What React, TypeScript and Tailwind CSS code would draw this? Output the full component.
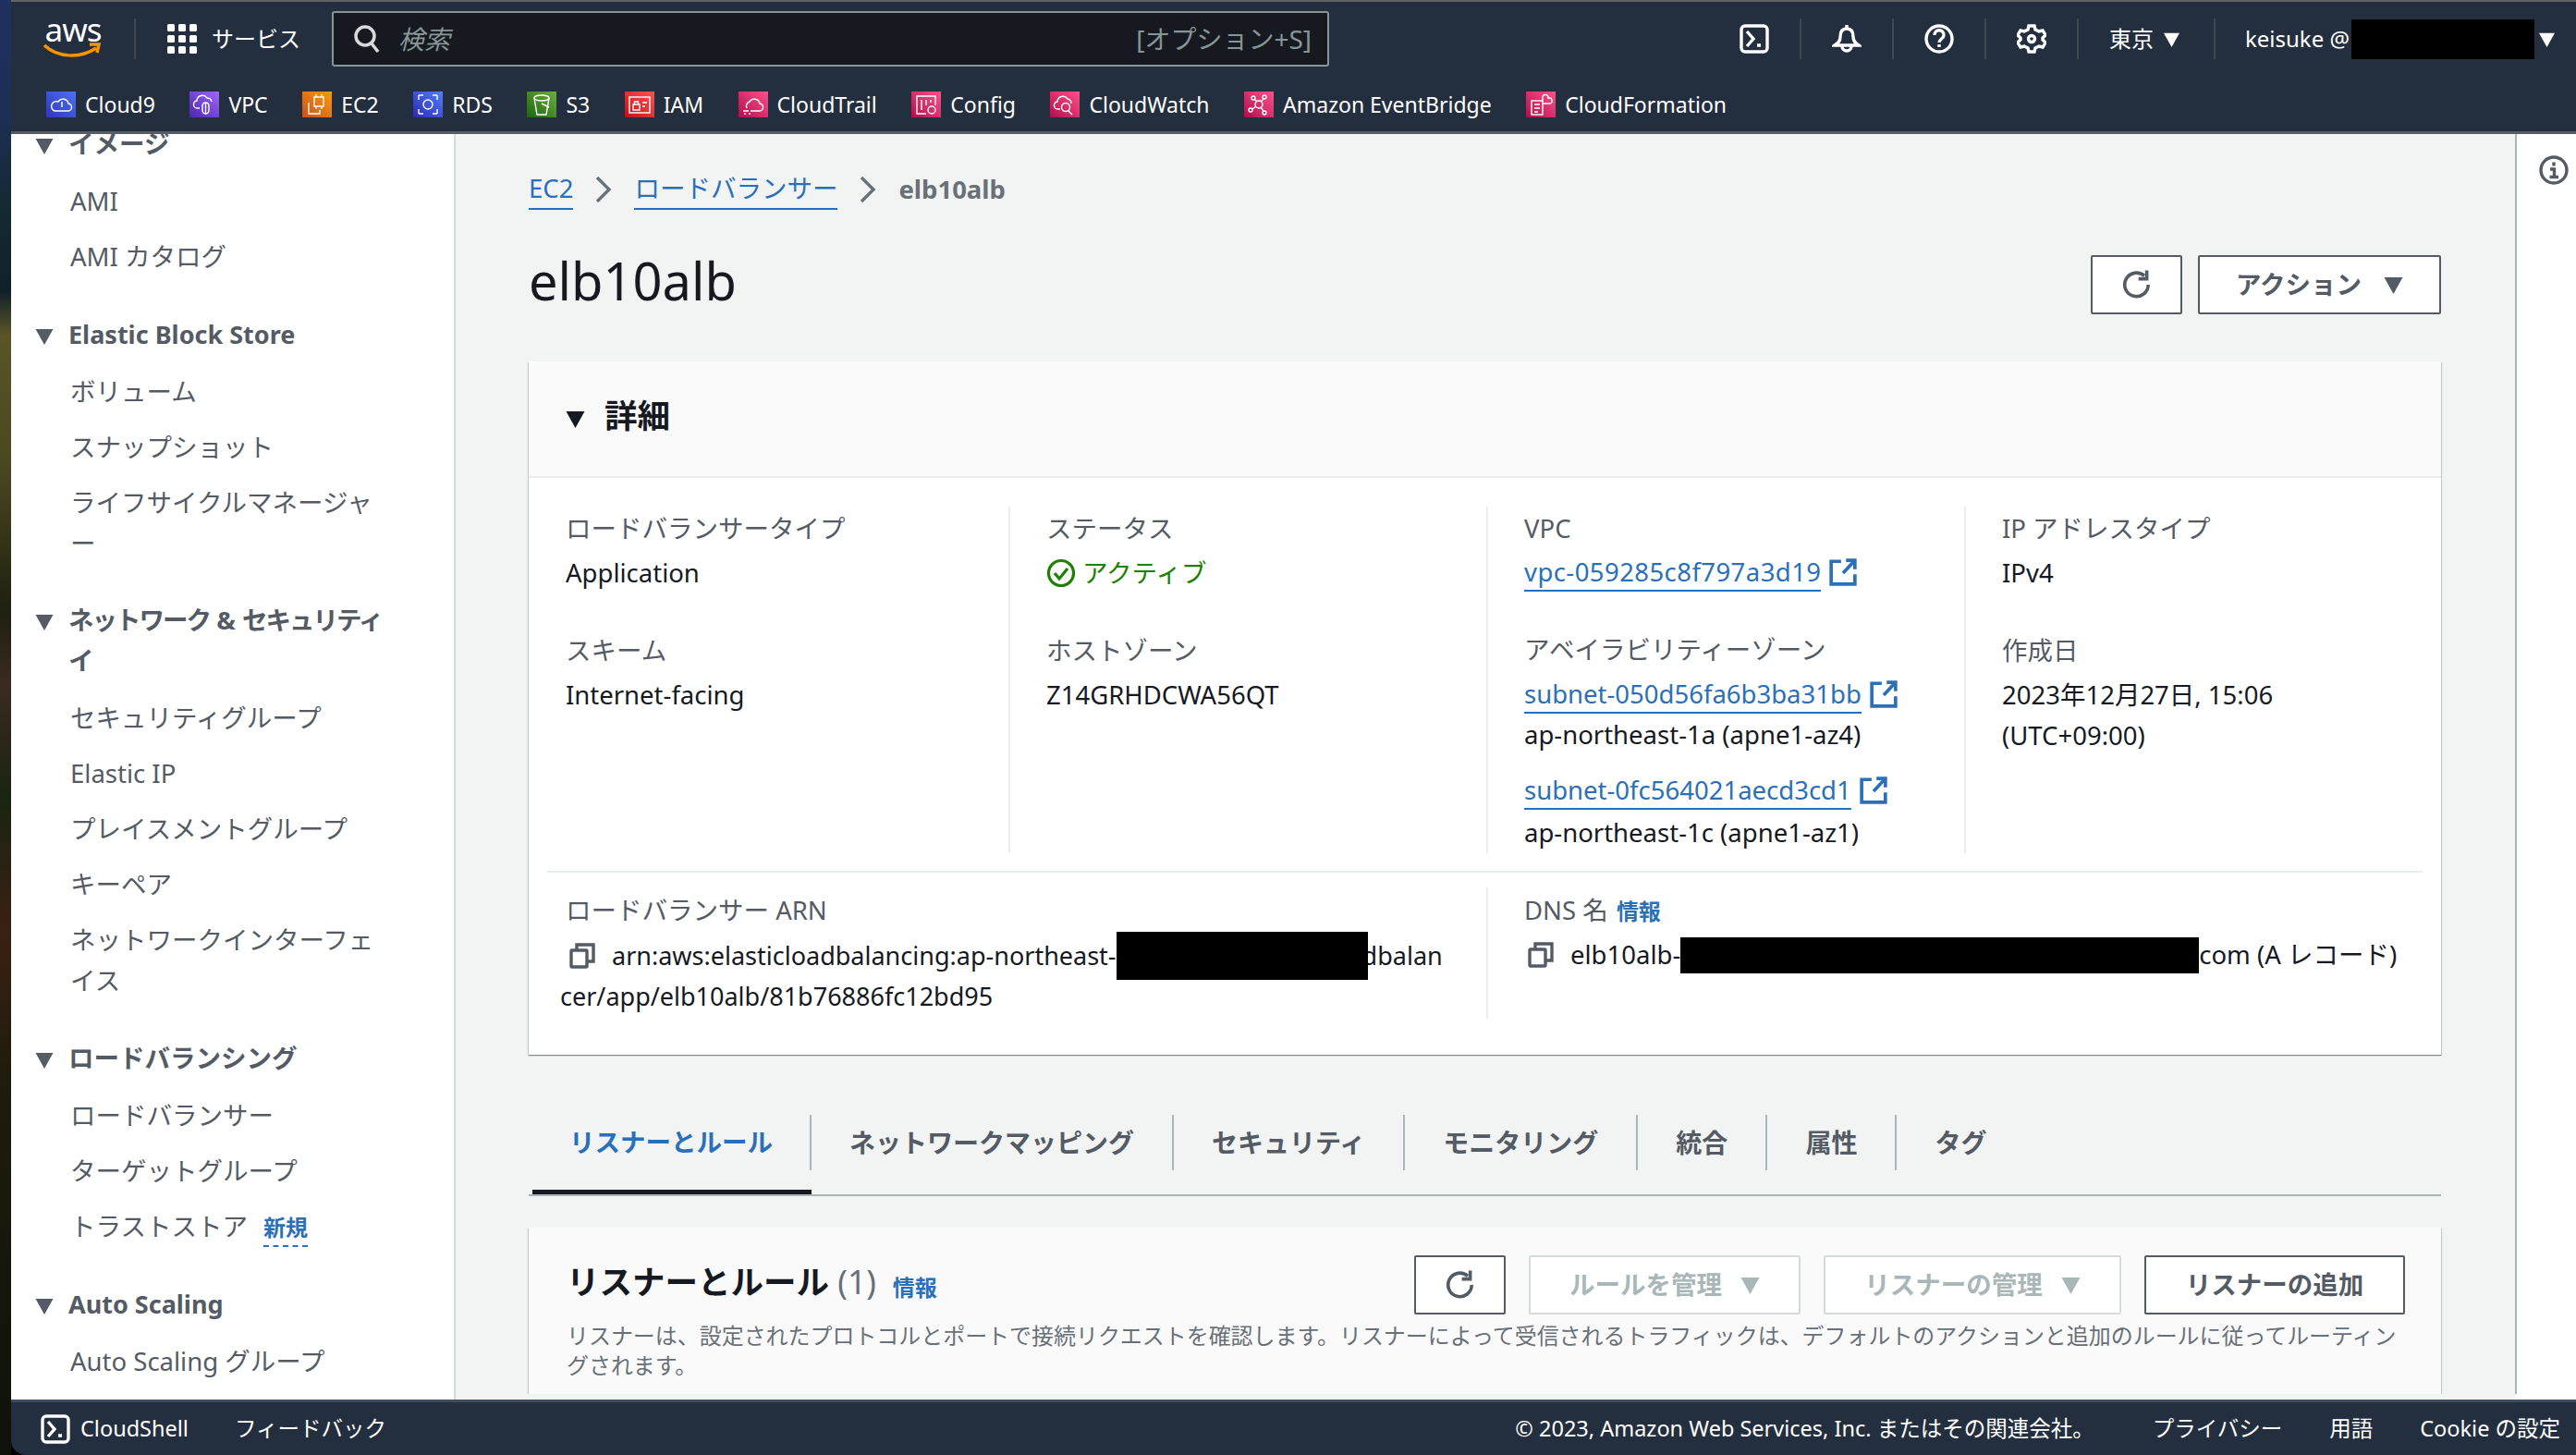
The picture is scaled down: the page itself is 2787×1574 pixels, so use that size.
import React from 'react';

const Caret = ({ className }: { className: string }) => (
  <svg viewBox="0 0 10 10" className={className}>
    <path d="M0 1h10L5 10z" fill="currentColor" />
  </svg>
);

const Chevron = () => (
  <svg viewBox="0 0 18 28" className="h-[28px] w-[18px] text-[#687078]" fill="none" stroke="currentColor" strokeWidth="3.4">
    <path d="M2 1l13 13L2 27" />
  </svg>
);

const RefreshIcon = ({ className }: { className: string }) => (
  <svg viewBox="0 0 32 32" className={className} fill="none" stroke="currentColor" strokeWidth="3.4">
    <path d="M27.5 16a12 12 0 1 1-4-9" />
    <path d="M26 1.5V10h-8.5" />
  </svg>
);

const CopyIcon = () => (
  <svg viewBox="0 0 28 28" className="h-[28px] w-[28px] text-[#545b64]" fill="none" stroke="currentColor" strokeWidth="3.4">
    <rect x="2" y="8" width="17" height="18" rx="1" />
    <path d="M8 8V2h18v18h-7" />
  </svg>
);

const ExternalIcon = () => (
  <svg viewBox="0 0 28 28" className="h-[30px] w-[30px] text-[#2a70b8]" fill="none" stroke="currentColor" strokeWidth="3.4">
    <path d="M12 3H2v23h24V16" />
    <path d="M14 15L25 3M17 2h9v9" />
  </svg>
);

const ShellIcon = () => (
  <svg viewBox="0 0 32 32" className="h-[32px] w-[32px] text-white" fill="none" stroke="currentColor" strokeWidth="3.4">
    <rect x="2" y="2" width="28" height="28" rx="4" />
    <path d="M8 8l7 8-7 8" />
    <path d="M19 23h4" strokeWidth="3.5" />
  </svg>
);

const BellIcon = () => (
  <svg viewBox="0 0 32 32" className="h-[32px] w-[32px] text-white" fill="none" stroke="currentColor" strokeWidth="3.4">
    <path d="M16 1v4M16 5c-5 0-7 4-7 9 0 5-3 7-6 9h26c-3-2-6-4-6-9 0-5-2-9-7-9z" />
    <path d="M11 24a5 5 0 0 0 10 0" />
  </svg>
);

const HelpIcon = () => (
  <svg viewBox="0 0 32 32" className="h-[32px] w-[32px] text-white" fill="none" stroke="currentColor" strokeWidth="3.4">
    <circle cx="16" cy="16" r="14" />
    <path d="M11 12c0-7 10-7 10 0 0 4-5 4-5 8" />
    <path d="M16 22v3" />
  </svg>
);

const GearIcon = () => (
  <svg viewBox="0 0 32 32" className="h-[32px] w-[32px] text-white" fill="none" stroke="currentColor" strokeWidth="3.4">
    <path d="M13 2h6l1 4 4 2 4-1 3 5-3 3v2l3 3-3 5-4-1-4 2-1 4h-6l-1-4-4-2-4 1-3-5 3-3v-2L1 12l3-5 4 1 4-2z" />
    <circle cx="16" cy="16" r="3.5" />
  </svg>
);

const shortcuts = [
  { name: 'Cloud9', bg: 'bg-gradient-to-tr from-[#3334b9] to-[#4d72f3]', icon: <><path d="M9 21h14a4 4 0 0 0 1-8 6 6 0 0 0-11-2 5 5 0 0 0-4 10z" /><path d="M17 11v6" /></> },
  { name: 'VPC', bg: 'bg-gradient-to-tr from-[#4d27a8] to-[#a166ff]', icon: <><path d="M11 18H9a4 4 0 0 1-1-8 6 6 0 0 1 11-3 5 5 0 0 1 5 4" /><rect x="14" y="12" width="7" height="12" rx="3.5" /><path d="M17.5 12v12" /></> },
  { name: 'EC2', bg: 'bg-gradient-to-tr from-[#c8511b] to-[#ff9900]', icon: <><rect x="13" y="6" width="10" height="10" /><path d="M7 12v12h12v-4M15 3v3M21 3v3M15 16v3M21 16v3" /></> },
  { name: 'RDS', bg: 'bg-gradient-to-tr from-[#2e27ad] to-[#527fff]', icon: <><rect x="11" y="9" width="10" height="10" rx="5" /><path d="M6 4h5M6 4v5M26 4h-5M26 4v5M6 24h5M6 24v-5M26 24h-5M26 24v-5" /></> },
  { name: 'S3', bg: 'bg-gradient-to-tr from-[#1b660f] to-[#6cae3e]', icon: <><path d="M8 7l3 18h10l3-18" /><ellipse cx="16" cy="7" rx="8" ry="3" /><path d="M16 13l8 4" /></> },
  { name: 'IAM', bg: 'bg-gradient-to-tr from-[#bd0816] to-[#ff5252]', icon: <><rect x="5" y="6" width="22" height="17" /><rect x="9" y="14" width="7" height="6" /><path d="M10.5 14v-3h4v3M19 12h5M19 16h3" /></> },
  { name: 'CloudTrail', bg: 'bg-gradient-to-tr from-[#b0084d] to-[#ff4f8b]', icon: <><path d="M13 21h9a4 4 0 0 0 1-8 6 6 0 0 0-11-2 5 5 0 0 0-3 7" /><path d="M5 21h6M6 24h2M11 24h2" /></> },
  { name: 'Config', bg: 'bg-gradient-to-tr from-[#b0084d] to-[#ff4f8b]', icon: <><path d="M16 24H6V5h20v10" /><path d="M11 9v11M16 9v6M21 9v3" /><circle cx="22" cy="20" r="4" /></> },
  { name: 'CloudWatch', bg: 'bg-gradient-to-tr from-[#b0084d] to-[#ff4f8b]', icon: <><path d="M11 19H9a4 4 0 0 1-1-8 6 6 0 0 1 11-3 5 5 0 0 1 4 5" /><circle cx="17" cy="17" r="4.5" /><path d="M20 21l4 4" /></> },
  { name: 'Amazon EventBridge', bg: 'bg-gradient-to-tr from-[#b0084d] to-[#ff4f8b]', icon: <><circle cx="16" cy="14" r="4" /><circle cx="10" cy="7" r="2" /><circle cx="22" cy="6" r="2" /><circle cx="7" cy="20" r="2" /><circle cx="22" cy="23" r="2" /><path d="M11 8l3 3M21 8l-3 3M9 19l4-3M21 21l-3-4" /></> },
  { name: 'CloudFormation', bg: 'bg-gradient-to-tr from-[#b0084d] to-[#ff4f8b]', icon: <><path d="M18 11V6a3 3 0 0 1 6 1 3 3 0 0 1 2 6h-8" /><rect x="6" y="10" width="12" height="15" /><path d="M9 14h6M9 18h6M9 22h4" /></> },
];

const sidebar: { title: React.ReactNode; items: React.ReactNode[] }[] = [
  { title: 'イメージ', items: ['AMI', 'AMI カタログ'] },
  { title: <span className="text-[27px]">Elastic Block Store</span>, items: ['ボリューム', 'スナップショット', <>ライフサイクルマネージャ<br />ー</>] },
  {
    title: <><span className="tracking-[-2px]">ネットワーク</span> &amp; <span className="tracking-[-2px]">セキュリティ</span><br />イ</>,
    items: ['セキュリティグループ', 'Elastic IP', 'プレイスメントグループ', 'キーペア', <>ネットワークインターフェ<br />イス</>],
  },
  {
    title: 'ロードバランシング',
    items: [
      'ロードバランサー',
      'ターゲットグループ',
      <>トラストストア<span className="ml-[17px] border-b-2 border-dashed border-[#2a70b8] pb-[3px] text-[24px] font-bold text-[#2a70b8]">新規</span></>,
    ],
  },
  { title: <span className="text-[27px]">Auto Scaling</span>, items: ['Auto Scaling グループ'] },
];

const tabs = ['リスナーとルール', 'ネットワークマッピング', 'セキュリティ', 'モニタリング', '統合', '属性', 'タグ'];

const Label = ({ children }: { children: React.ReactNode }) => (
  <div className="text-[27.5px] leading-[44px] text-[#545b64]">{children}</div>
);

const Value = ({ children, className = '' }: { children: React.ReactNode; className?: string }) => (
  <div className={`text-[27.5px] leading-[44px] text-[#16191f] ${className}`}>{children}</div>
);

const ExtLink = ({ children, className = '' }: { children: React.ReactNode; className?: string }) => (
  <div className={`flex items-center gap-[9px] text-[27.5px] leading-[44px] text-[#2a70b8] ${className}`}>
    <span className="h-[42px] border-b-2 border-[#2a70b8] leading-[42px]">{children}</span>
    <ExternalIcon />
  </div>
);

const App: React.FC = () => {
  return (
    <div className="flex h-[1574px] w-[2787px] overflow-hidden bg-black font-['Noto_Sans','Noto_Sans_CJK_JP',sans-serif]">
      {/* desktop wallpaper peeking out on the left */}
      <div className="w-[12px] shrink-0 bg-[linear-gradient(180deg,#1f3060_0%,#1c2f55_8%,#142a33_14%,#10202a_20%,#5a5426_23%,#4a4820_32%,#1e2010_42%,#3a2a20_47%,#1a2410_55%,#3a2012_64%,#1e1c0c_74%,#0e120a_100%)]" />

      <div className="flex min-w-0 flex-1 flex-col">
        {/* top nav */}
        <header className="h-[145px] shrink-0 border-t-2 border-b-[3px] border-t-[#5f6368] border-b-[#545b64] bg-[#232f3e]">
          <div className="flex h-[80px] items-center pl-[35px]">
            <div className="flex w-[64px] flex-col items-center">
              <span className="h-[26px] text-[35px] leading-[24px] tracking-[-1px] text-white">aws</span>
              <svg viewBox="0 0 64 18" className="h-[18px] w-[64px]" fill="none" stroke="#f79400" strokeWidth="3.5">
                <path d="M1 3c14 13 38 15 56 3M50 2h10l-2 9" />
              </svg>
            </div>
            <div className="ml-[34px] mr-[34px] h-[44px] w-[2px] bg-[#414750]" />
            <svg viewBox="0 0 32 32" className="h-[32px] w-[32px]" fill="#fff">
              <rect x="0" width="8" height="8" rx="1.5" /><rect x="12" width="8" height="8" rx="1.5" /><rect x="24" width="8" height="8" rx="1.5" />
              <rect x="0" y="12" width="8" height="8" rx="1.5" /><rect x="12" y="12" width="8" height="8" rx="1.5" /><rect x="24" y="12" width="8" height="8" rx="1.5" />
              <rect x="0" y="24" width="8" height="8" rx="1.5" /><rect x="12" y="24" width="8" height="8" rx="1.5" /><rect x="24" y="24" width="8" height="8" rx="1.5" />
            </svg>
            <span className="ml-[16px] w-[130px] text-[24px] text-white">サービス</span>
            <div className="flex h-[60px] w-[1079px] items-center rounded-[3px] border-2 border-[#879596] bg-[#16191f] pl-[22px] pr-[17px]">
              <svg viewBox="0 0 28 32" className="h-[32px] w-[28px] text-[#d5dbdb]" fill="none" stroke="currentColor" strokeWidth="3.5">
                <circle cx="12" cy="13" r="10" />
                <path d="M19 21l7 9" />
              </svg>
              <span className="ml-[20px] text-[28px] italic text-[#879596]">検索</span>
              <span className="ml-auto text-[28px] text-[#879596]">[オプション+S]</span>
            </div>
            <div className="ml-[444px] flex items-center">
              <ShellIcon />
              <div className="mx-[33px] h-[44px] w-[2px] bg-[#414750]" />
              <BellIcon />
              <div className="mx-[33px] h-[44px] w-[2px] bg-[#414750]" />
              <HelpIcon />
              <div className="mx-[33px] h-[44px] w-[2px] bg-[#414750]" />
              <GearIcon />
              <div className="mx-[33px] h-[44px] w-[2px] bg-[#414750]" />
              <span className="text-[24px] text-white">東京</span>
              <Caret className="ml-[11px] h-[17px] w-[17px] text-white" />
              <div className="ml-[37px] mr-[32px] h-[44px] w-[2px] bg-[#414750]" />
              <span className="w-[115px] text-[24px] text-white">keisuke @</span>
              <div className="h-[43px] w-[198px] bg-black" />
              <Caret className="ml-[5px] h-[17px] w-[17px] text-white" />
            </div>
          </div>
          <div className="mt-[15px] flex h-[32px] items-center gap-[37.5px] pl-[38px]">
            {shortcuts.map((s) => (
              <div key={s.name} className="flex items-center gap-[10px]">
                <div className={`flex h-[28px] w-[32px] items-center justify-center ${s.bg}`}>
                  <svg viewBox="0 0 32 28" className="h-[28px] w-[32px]" fill="none" stroke="#fff" strokeWidth="1.4">
                    {s.icon}
                  </svg>
                </div>
                <span className="text-[23px] leading-[32px] text-white">{s.name}</span>
              </div>
            ))}
          </div>
        </header>

        <div className="flex min-h-0 flex-1 bg-[#f2f3f3]">
          {/* side navigation */}
          <aside className="w-[481px] shrink-0 overflow-hidden border-r-2 border-[#d5dbdb] bg-white">
            <div className="mt-[-19px] flex flex-col gap-[25.5px]">
              {sidebar.map((section, i) => (
                <div key={i}>
                  <div className="flex py-[8px]">
                    <Caret className="ml-[26px] mr-[16px] mt-[14px] h-[19px] w-[20px] shrink-0 text-[#545b64]" />
                    <div className="text-[27.5px] font-bold leading-[44px] text-[#545b64]">{section.title}</div>
                  </div>
                  {section.items.map((item, j) => (
                    <div key={j} className="pb-[6px] pl-[64px] pt-[10px] text-[27.5px] leading-[44px] text-[#545b64]">
                      {item}
                    </div>
                  ))}
                </div>
              ))}
            </div>
          </aside>

          {/* page content */}
          <main className="h-[1363px] min-w-0 flex-1 overflow-hidden pl-[79px] pr-[80px] pt-[38px]">
            <div className="flex h-[44px] items-center text-[27.5px]">
              <span className="h-[44px] border-b-2 border-[#2a70b8] leading-[42px] text-[#2a70b8]">EC2</span>
              <span className="mx-[24px]"><Chevron /></span>
              <span className="h-[44px] border-b-2 border-[#2a70b8] leading-[42px] text-[#2a70b8]">ロードバランサー</span>
              <span className="mx-[24px]"><Chevron /></span>
              <span className="font-bold text-[#687078]">elb10alb</span>
            </div>

            <div className="mt-[49px] flex h-[64px] items-center justify-between">
              <h1 className="mb-[10px] text-[56px] leading-[64px] text-[#16191f]">elb10alb</h1>
              <div className="flex gap-[17px]">
                <button className="flex h-[64px] w-[99px] items-center justify-center rounded-[2px] border-2 border-[#545b64] bg-white text-[#545b64]">
                  <RefreshIcon className="h-[34px] w-[34px]" />
                </button>
                <button className="flex h-[64px] w-[263px] items-center justify-center gap-[24px] rounded-[2px] border-2 border-[#545b64] bg-white text-[27.5px] font-bold text-[#545b64]">
                  アクション
                  <Caret className="h-[20px] w-[21px]" />
                </button>
              </div>
            </div>

            {/* details card */}
            <section className="mt-[51px] h-[750px] bg-white shadow-[0_1px_1px_0_rgba(0,28,36,0.3),1px_1px_1px_0_rgba(0,28,36,0.15),-1px_1px_1px_0_rgba(0,28,36,0.15)]">
              <div className="flex h-[126px] items-center border-b-2 border-[#eaeded] bg-[#fafafa] pl-[40px]">
                <Caret className="h-[20px] w-[21px] text-[#16191f]" />
                <h2 className="mb-[6px] ml-[21px] text-[35.5px] font-bold text-[#16191f]">詳細</h2>
              </div>
              <div className="px-[20px] pt-[31px]">
                <div className="grid h-[374px] grid-cols-[499px_517px_517px_495px]">
                  <div className="pl-[20px] pt-[2px]">
                    <Label>ロードバランサータイプ</Label>
                    <Value className="mt-[4px]">Application</Value>
                    <div className="mt-[40px]"><Label>スキーム</Label></div>
                    <Value className="mt-[4px]">Internet-facing</Value>
                  </div>
                  <div className="border-l-2 border-[#eaeded] pl-[39px] pt-[2px]">
                    <Label>ステータス</Label>
                    <div className="mt-[4px] flex items-center gap-[7px] text-[27.5px] leading-[44px] text-[#1d8102]">
                      <svg viewBox="0 0 32 32" className="h-[32px] w-[32px]" fill="none" stroke="currentColor" strokeWidth="3.2">
                        <circle cx="16" cy="16" r="13.5" />
                        <path d="M9 16l5 6 9-11" />
                      </svg>
                      アクティブ
                    </div>
                    <div className="mt-[40px]"><Label>ホストゾーン</Label></div>
                    <Value className="mt-[4px]">Z14GRHDCWA56QT</Value>
                  </div>
                  <div className="border-l-2 border-[#eaeded] pl-[39px] pt-[2px]">
                    <Label>VPC</Label>
                    <ExtLink className="mt-[4px]"><span className="tracking-[0.43px]">vpc-059285c8f797a3d19</span></ExtLink>
                    <div className="mt-[41px]"><Label>アベイラビリティーゾーン</Label></div>
                    <ExtLink className="mt-[5px]">subnet-050d56fa6b3ba31bb</ExtLink>
                    <Value className="mt-[1px]">ap-northeast-1a (apne1-az4)</Value>
                    <ExtLink className="mt-[17px]">subnet-0fc564021aecd3cd1</ExtLink>
                    <Value className="mt-[3px]">ap-northeast-1c (apne1-az1)</Value>
                  </div>
                  <div className="border-l-2 border-[#eaeded] pl-[39px] pt-[2px]">
                    <Label>IP アドレスタイプ</Label>
                    <Value className="mt-[4px]">IPv4</Value>
                    <div className="mt-[40px]"><Label>作成日</Label></div>
                    <Value className="mt-[4px]">2023年12月27日, 15:06<br />(UTC+09:00)</Value>
                  </div>
                </div>
                <div className="mt-[20px] h-[2px] bg-[#eaeded]" />
                <div className="mt-[16px] grid grid-cols-[1016px_1fr]">
                  <div className="pl-[20px] pt-[3px]">
                    <Label>ロードバランサー ARN</Label>
                    <div className="mt-[5px] text-[27px] leading-[44px] text-[#16191f]">
                      <div className="flex h-[44px] items-center pl-[4px] whitespace-nowrap">
                        <CopyIcon />
                        <span className="ml-[18px]">arn:aws:elasticloadbalancing:ap-northeast-</span>
                        <span className="relative z-10 h-[52px] w-[272px] shrink-0 bg-black" />
                        <span className="ml-[-6px]">dbalan</span>
                      </div>
                      <div className="ml-[-6px]">cer/app/elb10alb/81b76886fc12bd95</div>
                    </div>
                  </div>
                  <div className="h-[142px] border-l-2 border-[#eaeded] pl-[39px] pt-[3px]">
                    <Label>DNS 名 <span className="ml-[2px] text-[24px] font-bold text-[#2a70b8]">情報</span></Label>
                    <div className="mt-[3px] flex h-[44px] items-center pl-[4px] text-[27.5px] text-[#16191f] whitespace-nowrap">
                      <CopyIcon />
                      <span className="ml-[18px]">elb10alb-</span>
                      <span className="h-[39px] w-[561px] shrink-0 bg-black" />
                      <span>com (A レコード)</span>
                    </div>
                  </div>
                </div>
              </div>
            </section>

            {/* tabs */}
            <div className="mt-[65px] flex h-[88px] items-start border-b-2 border-[#aab7b8] pl-[4px]">
              {tabs.map((t, i) => (
                <div key={t} className={`h-[86px] ${i === 0 ? 'border-b-[5px] border-[#16191f]' : ''}`}>
                  <div
                    className={`flex h-[60px] items-center font-bold ${i === 0 ? 'px-[40px] text-[27.5px] text-[#2a70b8]' : 'px-[41px] text-[28px] text-[#545b64]'} ${i < tabs.length - 1 ? 'border-r-2 border-[#aab7b8]' : ''}`}
                  >
                    {t}
                  </div>
                </div>
              ))}
            </div>

            {/* listeners card */}
            <section className="mt-[34px] bg-[#fafafa] pb-[20px] pl-[41px] pr-[39px] pt-[30px] shadow-[0_1px_1px_0_rgba(0,28,36,0.3),1px_1px_1px_0_rgba(0,28,36,0.15),-1px_1px_1px_0_rgba(0,28,36,0.15)]">
              <div className="flex h-[64px] items-center">
                <h2 className="mb-[6px] text-[35.5px] font-bold text-[#16191f]">
                  リスナーとルール <span className="font-normal text-[#687078]">(1)</span>
                </h2>
                <span className="ml-[18px] mt-[6px] text-[24px] font-bold text-[#2a70b8]">情報</span>
                <div className="ml-auto flex items-center gap-[25px]">
                  <button className="flex h-[64px] w-[99px] items-center justify-center rounded-[2px] border-2 border-[#545b64] bg-white text-[#545b64]">
                    <RefreshIcon className="h-[34px] w-[34px]" />
                  </button>
                  <button className="flex h-[64px] w-[294px] items-center justify-center gap-[20px] rounded-[2px] border-2 border-[#d5dbdb] bg-white text-[27.5px] font-bold text-[#aab7b8]">
                    ルールを管理
                    <Caret className="h-[20px] w-[21px]" />
                  </button>
                  <button className="flex h-[64px] w-[322px] items-center justify-center gap-[20px] rounded-[2px] border-2 border-[#d5dbdb] bg-white text-[27.5px] font-bold text-[#aab7b8]">
                    リスナーの管理
                    <Caret className="h-[20px] w-[21px]" />
                  </button>
                  <button className="flex h-[64px] w-[282px] items-center justify-center rounded-[2px] border-2 border-[#545b64] bg-white text-[27.5px] font-bold text-[#545b64]">
                    リスナーの追加
                  </button>
                </div>
              </div>
              <p className="mt-[7px] text-[23.96px] leading-[32px] text-[#687078] whitespace-nowrap">
                リスナーは、設定されたプロトコルとポートで接続リクエストを確認します。リスナーによって受信されるトラフィックは、デフォルトのアクションと追加のルールに従ってルーティン
                <br />
                グされます。
              </p>
            </section>
          </main>

          {/* help panel rail */}
          <div className="w-[66px] shrink-0 bg-white">
            <div className="h-[1363px] border-l-2 border-[#aab7b8] pl-[24px] pt-[23px]">
              <svg viewBox="0 0 32 32" className="h-[32px] w-[32px] text-[#545b64]" fill="none" stroke="currentColor" strokeWidth="3.4">
                <circle cx="16" cy="16" r="14" />
                <path d="M16 7.5v4M12 15h4.5v8M11.5 23.5h9.5" />
              </svg>
            </div>
          </div>
        </div>

        {/* footer */}
        <footer className="flex h-[60px] shrink-0 items-center rounded-bl-[16px] border-t-[3px] border-[#414d5c] bg-[#232f3e] pl-[32px] pr-[17px] text-[23.5px] text-white">
          <ShellIcon />
          <span className="ml-[11px]">CloudShell</span>
          <span className="ml-[50px]">フィードバック</span>
          <span className="ml-auto">© 2023, Amazon Web Services, Inc. またはその関連会社。</span>
          <span className="ml-[63px]">プライバシー</span>
          <span className="ml-[51px]">用語</span>
          <span className="ml-[51px]">Cookie の設定</span>
        </footer>
      </div>
    </div>
  );
};

export default App;
